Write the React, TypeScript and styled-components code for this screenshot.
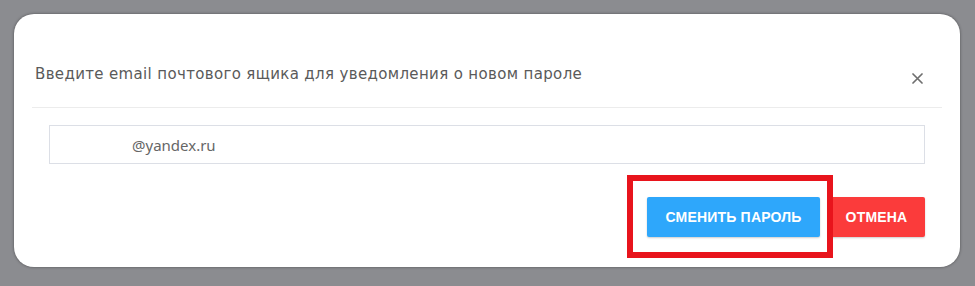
import * as React from 'react';
import styled, { createGlobalStyle } from 'styled-components';

const GlobalStyle = createGlobalStyle`
  html, body {
    margin: 0;
    padding: 0;
    background-color: #8b8c90;
  }
  * {
    box-sizing: border-box;
  }
`;

const App: React.FC = () => {
  return (
    <Page>
      <GlobalStyle />
      <Modal>
        <Header>
          <Title>Введите email почтового ящика для уведомления о новом пароле</Title>
          <CloseButton aria-label="Закрыть">
            <svg width="11" height="11" viewBox="0 0 11 11">
              <path d="M1 1L10 10M10 1L1 10" stroke="#6f6f6f" strokeWidth="1.7" strokeLinecap="round" />
            </svg>
          </CloseButton>
        </Header>
        <Body>
          <Field>
            <Hidden />
            <FieldText>@yandex.ru</FieldText>
          </Field>
          <Actions>
            <Marked>
              <Button variant="primary">Сменить пароль</Button>
              <Frame />
            </Marked>
            <Button variant="danger">Отмена</Button>
          </Actions>
        </Body>
      </Modal>
    </Page>
  );
};

interface ButtonIF {
  variant: 'primary' | 'danger';
}

const Page = styled.div`
  width: 975px;
  height: 286px;
  padding: 14px 15px 19px 14px;
`;

const Modal = styled.div`
  display: flex;
  flex-direction: column;
  width: 946px;
  height: 253px;
  background-color: #ffffff;
  border-radius: 20px;
  box-shadow: 0 0 3px rgba(0, 0, 0, 0.45);
`;

const Header = styled.div`
  display: flex;
  align-items: center;
  justify-content: space-between;
  margin: 0 18px;
  padding: 49px 19px 23px 3px;
  border-bottom: 1px solid #ececec;
`;

const Title = styled.h2`
  margin: 0;
  color: #5a5a5a;
  font-family: 'DejaVu Sans', sans-serif;
  font-size: 15px;
  font-weight: normal;
  line-height: 20px;
  letter-spacing: 0.35px;
`;

const CloseButton = styled.button`
  display: flex;
  align-items: center;
  justify-content: center;
  margin-top: 10px;
  padding: 0;
  border: none;
  background: none;
  cursor: pointer;
`;

const Body = styled.div`
  display: flex;
  flex-direction: column;
  padding: 17px 35px 0 35px;
`;

const Field = styled.div`
  display: flex;
  align-items: center;
  height: 39px;
  padding: 0 16px;
  border: 1px solid #dcdfe6;
`;

const Hidden = styled.span`
  width: 66px;
`;

const FieldText = styled.span`
  color: #666666;
  font-family: 'Noto Sans', sans-serif;
  font-size: 15px;
`;

const Actions = styled.div`
  display: flex;
  justify-content: flex-end;
  gap: 8px;
  margin-top: 33px;
`;

const Marked = styled.div`
  position: relative;
  display: flex;
`;

const Frame = styled.div`
  position: absolute;
  left: -20px;
  top: -22px;
  width: 206px;
  height: 83px;
  border: 6px solid #e8141c;
  pointer-events: none;
`;

const Button = styled.button<ButtonIF>`
  height: 40px;
  padding: 0;
  width: ${(props) => (props.variant === 'primary' ? '173px' : '97px')};
  border: none;
  border-radius: 2px;
  background-color: ${(props) => (props.variant === 'primary' ? '#2ea7fb' : '#fb3b3b')};
  box-shadow: 0 1px 2px rgba(0, 0, 0, 0.2);
  color: #ffffff;
  font-family: 'Liberation Sans', Arial, sans-serif;
  font-size: 14px;
  font-weight: bold;
  letter-spacing: 0.2px;
  text-transform: uppercase;
  cursor: pointer;
`;

export default App;
